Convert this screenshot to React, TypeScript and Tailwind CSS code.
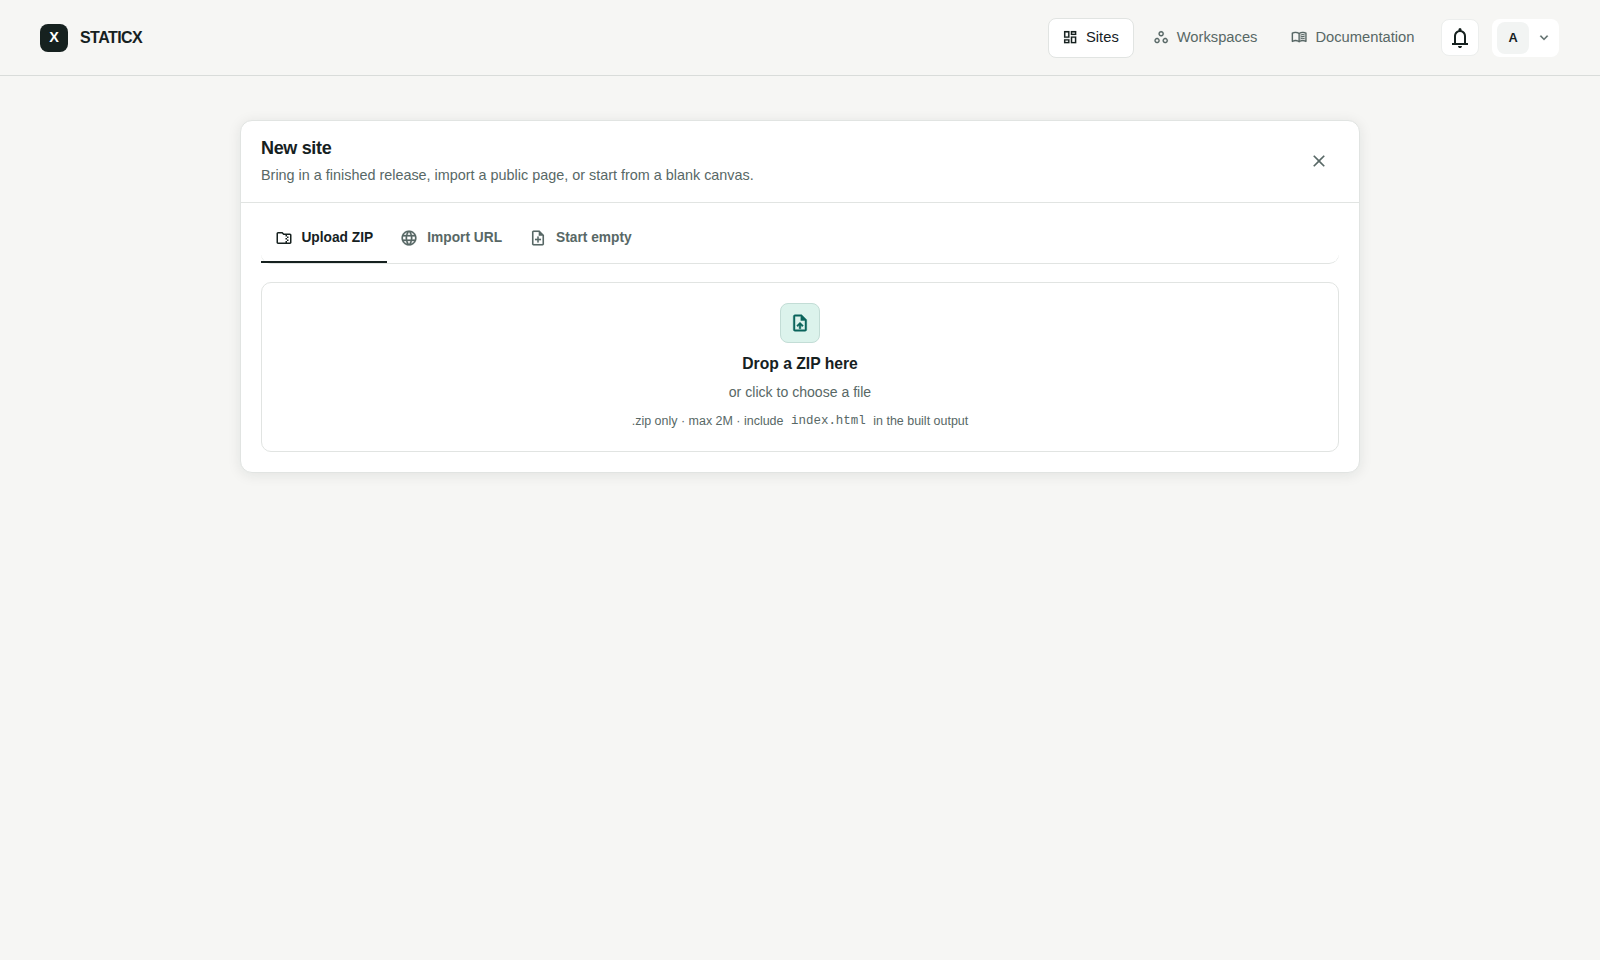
import { useState } from "react";

interface IconProps {
  size: number;
  className?: string;
}

// All glyphs share the 960 unit grid with its origin at the bottom left
function createIcon(path: string, weight = 0) {
  return function Icon({ size, className = "" }: IconProps) {
    return (
      <svg
        width={size}
        height={size}
        viewBox="0 -960 960 960"
        fill="currentColor"
        stroke="currentColor"
        strokeWidth={weight}
        className={`shrink-0 ${className}`}
        aria-hidden="true"
      >
        <path d={path} />
      </svg>
    );
  };
}

const DashboardIcon = createIcon(
  "M520-600v-240h320v240H520ZM120-440v-400h320v400H120Zm400 320v-400h320v400H520Zm-400 0v-240h320v240H120Zm80-400h160v-240H200v240Zm400 320h160v-240H600v240Zm0-480h160v-80H600v80ZM200-200h160v-80H200v80Z",
  8
);
const WorkspacesIcon = createIcon(
  "M240-120q-66 0-113-47T80-280q0-66 47-113t113-47q66 0 113 47t47 113q0 66-47 113t-113 47Zm480 0q-66 0-113-47t-47-113q0-66 47-113t113-47q66 0 113 47t47 113q0 66-47 113t-113 47Zm-480-80q33 0 56.5-23.5T320-280q0-33-23.5-56.5T240-360q-33 0-56.5 23.5T160-280q0 33 23.5 56.5T240-200Zm480 0q33 0 56.5-23.5T800-280q0-33-23.5-56.5T720-360q-33 0-56.5 23.5T640-280q0 33 23.5 56.5T720-200ZM480-520q-66 0-113-47t-47-113q0-66 47-113t113-47q66 0 113 47t47 113q0 66-47 113t-113 47Zm0-80q33 0 56.5-23.5T560-680q0-33-23.5-56.5T480-760q-33 0-56.5 23.5T400-680q0 33 23.5 56.5T480-600Z",
  8
);
const MenuBookIcon = createIcon(
  "M560-564v-68q33-14 67.5-21t72.5-7q26 0 51 4t49 10v64q-24-9-48.5-13.5T700-600q-38 0-73 9.5T560-564Zm0 220v-68q33-14 67.5-21t72.5-7q26 0 51 4t49 10v64q-24-9-48.5-13.5T700-380q-38 0-73 9t-67 27Zm0-110v-68q33-14 67.5-21t72.5-7q26 0 51 4t49 10v64q-24-9-48.5-13.5T700-490q-38 0-73 9.5T560-454ZM260-320q47 0 91.5 10.5T440-278v-394q-41-24-87-36t-93-12q-36 0-71.5 7T120-692v396q35-12 69.5-18t70.5-6Zm260 42q44-21 88.5-31.5T700-320q36 0 70.5 6t69.5 18v-396q-33-14-68.5-21t-71.5-7q-47 0-93 12t-87 36v394Zm-40 118q-48-38-104-59t-116-21q-42 0-82.5 11T100-198q-21 11-40.5-1T40-234v-482q0-11 5.5-21T62-752q46-24 96-36t102-12q58 0 113.5 15T480-740q51-30 106.5-45T700-800q52 0 102 12t96 36q11 5 16.5 15t5.5 21v482q0 23-19.5 35t-40.5 1q-37-20-77.5-31T700-240q-60 0-116 21t-104 59Z",
  6
);
const BellIcon = createIcon(
  "M160-200v-80h80v-280q0-83 50-147.5T420-792v-28q0-25 17.5-42.5T480-880q25 0 42.5 17.5T540-820v28q80 20 130 84.5T720-560v280h80v80H160Zm320 120q-33 0-56.5-23.5T400-160h160q0 33-23.5 56.5T480-80ZM320-280h320v-280q0-66-47-113t-113-47q-66 0-113 47t-47 113v280Z"
);
const ChevronDownIcon = createIcon(
  "M480-344 240-584l56-56 184 184 184-184 56 56-240 240Z",
  14
);
const CloseIcon = createIcon(
  "m256-200-56-56 224-224-224-224 56-56 224 224 224-224 56 56-224 224 224 224-56 56-224-224-224 224Z"
);
const FolderZipIcon = createIcon(
  "M640-480v-80h80v80h-80Zm0 80h-80v-80h80v80Zm0 80v-80h80v80h-80ZM447-640l-80-80H160v480h400v-80h80v80h160v-400H640v80h-80v-80H447ZM160-160q-33 0-56.5-23.5T80-240v-480q0-33 23.5-56.5T160-800h240l80 80h320q33 0 56.5 23.5T880-640v400q0 33-23.5 56.5T800-160H160Z"
);
const GlobeIcon = createIcon(
  "M480-80q-82 0-155-31.5t-127.500-86Q143-252 111.500-325T80-480q0-83 31.500-155.500t86-127Q252-817 325-848.500T480-880q83 0 155.500 31.500t127 86q54.500 54.500 86 127T880-480q0 82-31.500 155t-86 127.500q-54.500 54.500-127 86T480-80Zm0-82q26-36 45-75t31-83H404q12 44 31 83t45 75Zm-104-16q-18-33-31.500-68.500T322-320H204q29 50 72.500 87t99.500 55Zm208 0q56-18 99.500-55t72.500-87H638q-9 38-22.500 73.500T584-178ZM170-400h136q-3-20-4.500-39.500T300-480q0-21 1.500-40.500T306-560H170q-5 20-7.500 39.500T160-480q0 21 2.500 40.500T170-400Zm216 0h188q3-20 4.500-39.500T580-480q0-21-1.500-40.500T574-560H386q-3 20-4.500 39.500T380-480q0 21 1.500 40.500T386-400Zm268 0h136q5-20 7.500-39.500T800-480q0-21-2.500-40.500T790-560H654q3 20 4.500 39.500T660-480q0 21-1.500 40.500T654-400Zm-16-240h118q-29-50-72.500-87T584-782q18 33 31.500 68.500T638-640Zm-234 0h152q-12-44-31-83t-45-75q-26 36-45 75t-31 83Zm-200 0h118q9-38 22.500-73.500T376-782q-56 18-99.500 55T204-640Z",
  12
);
const NoteAddIcon = createIcon(
  "M440-240h80v-120h120v-80H520v-120h-80v120H320v80h120v120ZM240-80q-33 0-56.500-23.500T160-160v-640q0-33 23.500-56.500T240-880h320l240 240v480q0 33-23.500 56.500T720-80H240Zm280-520v-200H240v640h480v-440H520Z",
  6
);
const UploadFileIcon = createIcon(
  "M440-200h80v-167l64 64 56-57-160-160-160 160 57 56 63-63v167ZM240-80q-33 0-56.500-23.500T160-160v-640q0-33 23.500-56.500T240-880h320l240 240v480q0 33-23.500 56.500T720-80H240Zm280-520v-200H240v640h480v-440H520Z",
  20
);

const navItems = [
  { label: "Sites", icon: DashboardIcon, active: true },
  { label: "Workspaces", icon: WorkspacesIcon },
  { label: "Documentation", icon: MenuBookIcon },
];

const tabs = [
  { id: "zip", label: "Upload ZIP", icon: FolderZipIcon },
  { id: "url", label: "Import URL", icon: GlobeIcon },
  { id: "empty", label: "Start empty", icon: NoteAddIcon },
];

function Header() {
  return (
    <header className="flex h-[76px] items-center justify-between border-b border-[#d9dcda] pr-[41px] pl-10">
      <a href="#" className="flex items-center gap-3">
        <span className="flex size-7 items-center justify-center rounded-lg bg-[#16211f] text-[14.4px] font-bold text-white">
          X
        </span>
        <span className="text-base font-bold tracking-[-0.55px]">STATICX</span>
      </a>

      <div className="flex items-center">
        <nav className="flex items-center gap-[5.2px]">
          {navItems.map(({ label, icon: Icon, active }) => (
            <a
              key={label}
              href="#"
              className={`flex h-10 items-center gap-[7.7px] rounded-lg border pr-[14px] pl-[12.8px] text-[14.72px] ${
                active
                  ? "border-[#e1e4e2] bg-white text-[#16211f]"
                  : "border-transparent text-[#586866]"
              }`}
            >
              <Icon size={16.3} />
              {label}
            </a>
          ))}
        </nav>

        <button className="ml-[11.6px] flex h-[37px] w-[38px] items-center justify-center rounded-lg border border-[#eceeed] bg-white">
          <BellIcon size={24} />
        </button>

        <button className="ml-[13px] flex h-[38px] w-[67px] items-center rounded-lg bg-white pl-[5px]">
          <span className="flex size-8 items-center justify-center rounded-lg bg-[#f2f4f3] text-[12.8px] font-bold">
            A
          </span>
          <ChevronDownIcon size={16} className="ml-[7px] text-[#586866]" />
        </button>
      </div>
    </header>
  );
}

function DropZone() {
  return (
    <label className="mt-[18px] flex h-[170px] cursor-pointer flex-col items-center rounded-[10px] border border-[#e1e4e2] pt-5">
      <span className="flex size-10 items-center justify-center rounded-lg border border-[#c3ddd6] bg-[#dcf3ec] pb-px text-[#0b655c]">
        <UploadFileIcon size={20} />
      </span>
      <span className="mt-[9px] text-[15.68px] leading-6 font-bold">
        Drop a ZIP here
      </span>
      <span className="mt-1 text-[14.08px] leading-6 text-[#586866]">
        or click to choose a file
      </span>
      <span className="mt-[5px] text-[12.48px] leading-6 text-[#586866]">
        .zip only · max 2M · include{" "}
        <code className="relative -top-px px-1 font-['Liberation_Mono',monospace] text-[12.48px]">
          index.html
        </code>{" "}
        in the built output
      </span>
      <input type="file" accept=".zip" className="hidden" />
    </label>
  );
}

function NewSiteCard() {
  const [activeTab, setActiveTab] = useState("zip");

  return (
    <section className="mx-auto mt-11 h-[353px] w-[1120px] rounded-xl border border-[#e1e4e2] bg-white shadow-[0_2px_14px_rgba(22,33,31,0.09)]">
      <div className="flex h-[82px] items-center justify-between border-b border-[#e1e4e2] px-5 pb-px">
        <div>
          <h1 className="text-lg leading-6 font-bold tracking-[-0.33px]">
            New site
          </h1>
          <p className="mt-[3px] text-[14.4px] leading-6 text-[#586866]">
            Bring in a finished release, import a public page, or start from a
            blank canvas.
          </p>
        </div>
        <button
          aria-label="Close"
          className="flex size-10 items-center justify-center text-[#586866]"
        >
          <CloseIcon size={20} />
        </button>
      </div>

      <div className="px-5 pt-2">
        <div className="flex h-[53px] rounded-[10px] border-b border-[#e1e4e2]">
          {tabs.map(({ id, label, icon: Icon }) => (
            <button
              key={id}
              onClick={() => setActiveTab(id)}
              className={`flex items-center gap-[8.8px] border-b-2 px-[13.6px] pt-1 text-[13.76px] leading-5 font-bold ${
                activeTab === id
                  ? "border-[#16211f]"
                  : "border-transparent text-[#586866]"
              }`}
            >
              <Icon size={18} className="-mt-px" />
              {label}
            </button>
          ))}
        </div>
        <DropZone />
      </div>
    </section>
  );
}

export default function App() {
  return (
    <div className="min-h-screen bg-[#f6f6f4] font-['Liberation_Sans',Arial,sans-serif] text-[#16211f]">
      <Header />
      <NewSiteCard />
    </div>
  );
}
